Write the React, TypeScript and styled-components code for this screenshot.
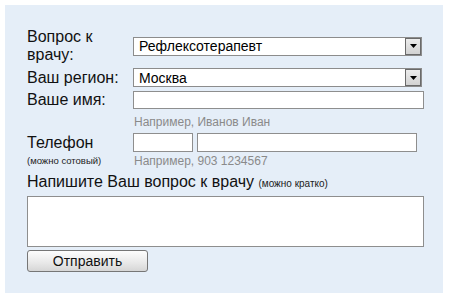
import React from 'react';
import styled, { createGlobalStyle } from 'styled-components';

const GlobalStyle = createGlobalStyle`
  body {
    margin: 0;
    background: #ffffff;
    font-family: "Liberation Sans", Arial, sans-serif;
  }
`;

const Panel = styled.form`
  margin: 5px 0 0 5px;
  width: 438px;
  height: 288px;
  box-sizing: border-box;
  padding: 23px 0 0 22px;
  background: #e5eef8;
  display: flex;
  flex-direction: column;
`;

const Row = styled.div<{ top?: number }>`
  display: grid;
  grid-template-columns: 106px auto;
  align-items: center;
  margin-top: ${({ top }) => top ?? 0}px;
`;

const Label = styled.label`
  font-size: 16px;
  line-height: 18px;
  color: #111;
`;

const SmallNote = styled.span`
  font-size: 9.5px;
  line-height: 14px;
  color: #222;
`;

const Hint = styled.span`
  font-size: 12px;
  line-height: 14px;
  color: #8a8a8a;
  padding-left: 1px;
`;

const SelectBox = styled.div`
  width: 289px;
  height: 19px;
  box-sizing: border-box;
  border: 1px solid #8c8c8c;
  background: #fff;
  display: flex;
  align-items: stretch;
`;

const NativeSelect = styled.select`
  flex: 1;
  appearance: none;
  border: none;
  outline: none;
  background: transparent;
  padding: 0 0 0 5px;
  margin: 0;
  font-family: "Liberation Sans", Arial, sans-serif;
  font-size: 14px;
  color: #000;
`;

const ArrowBox = styled.div`
  width: 16px;
  margin: 0 0 0 0;
  box-sizing: border-box;
  border: 1px solid #6a6a6a;
  background: linear-gradient(#ececec, #d2d2d2);
  display: flex;
  align-items: center;
  justify-content: center;
`;

const Input = styled.input<{ w: number; h?: number }>`
  width: ${({ w }) => w}px;
  height: ${({ h }) => h ?? 18}px;
  box-sizing: border-box;
  border: 1px solid #8e8e8e;
  background: #fff;
  padding: 0 4px;
  margin: 0;
  outline: none;
  font-family: "Liberation Sans", Arial, sans-serif;
  font-size: 13px;
`;

const PhoneFields = styled.div`
  display: flex;
  gap: 4px;
`;

const QuestionTitle = styled.div`
  margin-top: 5px;
  font-size: 16px;
  line-height: 18px;
  color: #111;
`;

const TitleNote = styled.span`
  font-size: 10px;
  color: #222;
`;

const TextArea = styled.textarea`
  display: block;
  margin-top: 3px;
  width: 397px;
  height: 51px;
  box-sizing: border-box;
  border: 1px solid #8e8e8e;
  background: #fff;
  resize: none;
  outline: none;
  font-family: "Liberation Sans", Arial, sans-serif;
`;

const SubmitButton = styled.button`
  margin-top: 3px;
  width: 121px;
  height: 22px;
  box-sizing: border-box;
  border: 1px solid #767676;
  border-radius: 3px;
  background: linear-gradient(#fdfdfd, #e8e8e8 60%, #d6d6d6);
  font-family: "Liberation Sans", Arial, sans-serif;
  font-size: 14px;
  color: #111;
  padding: 0;
`;

const Arrow = () => (
  <svg width="7" height="4" viewBox="0 0 7 4">
    <path d="M0 0 H7 L3.5 4 Z" fill="#000" />
  </svg>
);

const Select: React.FC<{ value: string }> = ({ value }) => (
  <SelectBox>
    <NativeSelect defaultValue={value}>
      <option>{value}</option>
    </NativeSelect>
    <ArrowBox>
      <Arrow />
    </ArrowBox>
  </SelectBox>
);

export default function App() {
  return (
    <>
      <GlobalStyle />
      <Panel onSubmit={(e) => e.preventDefault()}>
        <Row>
          <Label>
            Вопрос к
            <br />
            врачу:
          </Label>
          <Select value="Рефлексотерапевт" />
        </Row>
        <Row top={4}>
          <Label>Ваш регион:</Label>
          <Select value="Москва" />
        </Row>
        <Row top={4}>
          <Label>Ваше имя:</Label>
          <Input w={291} />
        </Row>
        <Row top={6}>
          <span />
          <Hint>Например, Иванов Иван</Hint>
        </Row>
        <Row top={4}>
          <Label>Телефон</Label>
          <PhoneFields>
            <Input w={60} h={19} />
            <Input w={220} h={19} />
          </PhoneFields>
        </Row>
        <Row top={2}>
          <SmallNote>(можно сотовый)</SmallNote>
          <Hint>Например, 903 1234567</Hint>
        </Row>
        <QuestionTitle>
          Напишите Ваш вопрос к врачу <TitleNote>(можно кратко)</TitleNote>
        </QuestionTitle>
        <TextArea />
        <div>
          <SubmitButton type="submit">Отправить</SubmitButton>
        </div>
      </Panel>
    </>
  );
}
